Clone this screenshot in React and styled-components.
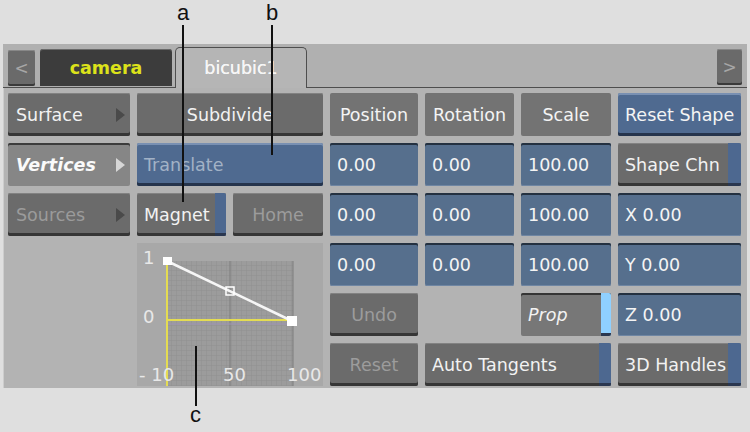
import React from "react";
import styled, { createGlobalStyle, css } from "styled-components";

const GlobalStyle = createGlobalStyle`
    html, body {
        margin: 0;
        padding: 0;
        background: #dfdfdf;
    }
    body {
        width: 750px;
        height: 432px;
        overflow: hidden;
        font-family: "DejaVu Sans", "Noto Sans", sans-serif;
    }
`;

// Page + panel
const Page = styled.div`
    position: relative;
    width: 750px;
    height: 432px;
    box-sizing: border-box;
    padding: 44px 0 0 3px;
`;

const Panel = styled.div`
    width: 744px;
    height: 344px;
    background: #b3b3b3;
    box-shadow: inset 1px 0 0 #cdcdcd;
`;

// Tab strip
const TabStrip = styled.div`
    display: flex;
    align-items: flex-end;
    height: 44px;
    box-sizing: border-box;
    padding-left: 5px;
    padding-right: 5px;
    background: #b0b0b0;
    border-bottom: 1px solid #4e4e4e;
`;

const ArrowTab = styled.div`
    display: flex;
    align-items: center;
    justify-content: center;
    width: ${(p) => p.$w}px;
    height: 36px;
    margin-bottom: ${(p) => p.$mb}px;
    background: #6a6a6a;
    border-radius: 2px;
    box-shadow: inset 0 -2px 0 #3a3a3a, inset 0 1px 0 #888;
    color: #a6a6a6;
    font-size: 17px;
`;

const Tab = styled.div`
    display: flex;
    align-items: center;
    justify-content: center;
    width: 132px;
    box-sizing: border-box;
    font-size: 17.5px;
    ${(p) =>
        p.$active
            ? css`
                  height: 41px;
                  margin: 0 0 -1px 3px;
                  background: #b5b5b5;
                  border: 1px solid #4e4e4e;
                  border-bottom: none;
                  border-radius: 5px 5px 0 0;
                  color: #f6f6f6;
                  text-shadow: 0 0 0.6px #fff;
              `
            : css`
                  height: 37px;
                  margin: 0 0 1px 5px;
                  background: #3c3c3c;
                  border-radius: 3px 3px 0 0;
                  box-shadow: inset 0 1px 0 #6a6a6a;
                  color: #dce21a;
                  font-weight: bold;
              `}
`;

const Spacer = styled.div`
    flex: 1;
`;

// Control grid
const Grid = styled.div`
    display: grid;
    grid-template-columns: 122px 186px 88px 89px 90px 123px;
    grid-auto-rows: 43px;
    gap: 7px;
    padding: 5px 0 0 5px;
`;

const cell = css`
    position: relative;
    display: flex;
    align-items: center;
    box-sizing: border-box;
    border-radius: 2px;
    font-size: 17.5px;
    white-space: nowrap;
    overflow: hidden;
`;

const NavButton = styled.div`
    ${cell};
    justify-content: space-between;
    padding: 0 5px 0 8px;
    ${(p) =>
        p.$state === "active"
            ? css`
                  background: #868686;
                  box-shadow: inset 0 2px 0 #3c3c3c;
                  color: #fafafa;
                  font-weight: bold;
                  font-style: italic;
              `
            : css`
                  background: #6b6b6b;
                  box-shadow: inset 0 -3px 0 #363636, inset 0 1px 0 #828282;
                  color: ${p.$state === "disabled" ? "#9b9b9b" : "#f2f2f2"};
              `}
`;

const NavArrow = styled.span`
    width: 0;
    height: 0;
    border-top: 7px solid transparent;
    border-bottom: 7px solid transparent;
    border-left: 9px solid ${(p) => (p.$light ? "#d6d6d6" : "#4a4a4a")};
`;

const Button = styled.div`
    ${cell};
    justify-content: ${(p) => (p.$left ? "flex-start" : "center")};
    padding-left: ${(p) => (p.$left ? "7px" : "0")};
    background: #6b6b6b;
    box-shadow: inset 0 -3px 0 #363636, inset 0 1px 0 #828282;
    color: ${(p) => (p.$dim ? "#9c9c9c" : "#f2f2f2")};
    grid-column: ${(p) => (p.$span ? `span ${p.$span}` : "auto")};
    ${(p) =>
        p.$pressed &&
        css`
            background: #777;
            box-shadow: inset 0 2px 0 #353535;
            font-style: italic;
        `}
`;

const Accent = styled.span`
    position: absolute;
    top: 0;
    right: 0;
    bottom: 0;
    width: ${(p) => p.$w || 12}px;
    background: ${(p) => p.$color || "#4d6890"};
    box-shadow: inset 0 -3px 0 #2a3750;
`;

const Header = styled.div`
    ${cell};
    justify-content: center;
    background: #737373;
    color: #f4f4f4;
`;

const Field = styled.div`
    ${cell};
    padding-left: 7px;
    background: #566f8d;
    box-shadow: inset 0 2px 0 #243140, inset 0 -1px 0 #6f86a3;
    color: #f4f4f4;
`;

const BlueButton = styled.div`
    ${cell};
    padding-left: 7px;
    background: #4f6a90;
    box-shadow: inset 0 -3px 0 #25344c, inset 0 2px 0 #7990b2;
    color: ${(p) => (p.$dim ? "#a2b2c6" : "#f4f4f4")};
`;

const Pair = styled.div`
    display: grid;
    grid-template-columns: 89px 90px;
    gap: 7px;
`;

const Empty = styled.div``;

const GraphBox = styled.div`
    grid-row: span 3;
    background: #a8a8a8;
`;

// Annotation callouts
const Overlay = styled.div`
    position: absolute;
    inset: 0;
    pointer-events: none;
`;

const Letter = styled.div`
    position: absolute;
    left: ${(p) => p.$x}px;
    top: ${(p) => p.$y}px;
    font-family: "Liberation Sans", Arial, sans-serif;
    font-size: 22px;
    line-height: 22px;
    color: #111;
`;

function Graph() {
    const label = { fill: "#e8e8e8", fontSize: 18, fontFamily: "DejaVu Sans, sans-serif" };
    return (
        <GraphBox>
            <svg width="186" height="143" viewBox="0 0 186 143">
                <defs>
                    <pattern id="fine" x="30" y="18" width="5" height="5" patternUnits="userSpaceOnUse">
                        <path d="M5 0V5H0" fill="none" stroke="#8c8c8c" strokeWidth="0.8" />
                    </pattern>
                </defs>
                <rect x="30" y="18" width="126" height="125" fill="#9c9c9c" />
                <rect x="30" y="18" width="126" height="125" fill="url(#fine)" />
                <line x1="93" y1="18" x2="93" y2="143" stroke="#7c7c7c" strokeWidth="1" />
                <line x1="156" y1="18" x2="156" y2="143" stroke="#7c7c7c" strokeWidth="1" />
                <line x1="30" y1="81" x2="156" y2="81" stroke="#9d92b4" strokeWidth="1" />
                <line x1="30" y1="18" x2="30" y2="143" stroke="#e4dc52" strokeWidth="2" />
                <line x1="30" y1="77" x2="156" y2="77" stroke="#e4dc52" strokeWidth="2" />
                <line x1="30" y1="18" x2="155" y2="78" stroke="#f6f6f6" strokeWidth="2.5" />
                <rect x="26" y="14" width="9" height="8" fill="#fff" />
                <rect x="150" y="73" width="10" height="10" fill="#fff" />
                <rect x="89" y="44" width="8" height="8" fill="none" stroke="#fff" strokeWidth="1.5" />
                <text x="6" y="21" {...label}>1</text>
                <text x="6" y="80" {...label}>0</text>
                <text x="2" y="138" {...label}>- 10</text>
                <text x="86" y="138" {...label}>50</text>
                <text x="150" y="138" {...label}>100</text>
            </svg>
        </GraphBox>
    );
}

export default function App() {
    return (
        <Page>
            <GlobalStyle />
            <Panel>
                <TabStrip>
                    <ArrowTab $w={27} $mb={1}>&lt;</ArrowTab>
                    <Tab>camera</Tab>
                    <Tab $active>bicubic1</Tab>
                    <Spacer />
                    <ArrowTab $w={25} $mb={2}>&gt;</ArrowTab>
                </TabStrip>

                <Grid>
                    {/* row 1 */}
                    <NavButton>
                        Surface <NavArrow />
                    </NavButton>
                    <Button>Subdivide</Button>
                    <Header>Position</Header>
                    <Header>Rotation</Header>
                    <Header>Scale</Header>
                    <BlueButton>Reset Shape</BlueButton>

                    {/* row 2 */}
                    <NavButton $state="active">
                        Vertices <NavArrow $light />
                    </NavButton>
                    <BlueButton $dim>Translate</BlueButton>
                    <Field>0.00</Field>
                    <Field>0.00</Field>
                    <Field>100.00</Field>
                    <Button $left>
                        Shape Chn
                        <Accent $w={13} />
                    </Button>

                    {/* row 3 */}
                    <NavButton $state="disabled">
                        Sources <NavArrow />
                    </NavButton>
                    <Pair>
                        <Button $left>
                            Magnet
                            <Accent $w={11} />
                        </Button>
                        <Button $dim>Home</Button>
                    </Pair>
                    <Field>0.00</Field>
                    <Field>0.00</Field>
                    <Field>100.00</Field>
                    <Field>X 0.00</Field>

                    {/* rows 4-6 */}
                    <Empty />
                    <Graph />
                    <Field>0.00</Field>
                    <Field>0.00</Field>
                    <Field>100.00</Field>
                    <Field>Y 0.00</Field>

                    <Empty />
                    <Button $dim>Undo</Button>
                    <Empty />
                    <Button $left $pressed>
                        Prop
                        <Accent $w={10} $color="#8fd0ff" />
                    </Button>
                    <Field>Z 0.00</Field>

                    <Empty />
                    <Button $dim>Reset</Button>
                    <Button $left $span={2}>
                        Auto Tangents
                        <Accent $w={12} />
                    </Button>
                    <Button $left>
                        3D Handles
                        <Accent $w={13} />
                    </Button>
                </Grid>
            </Panel>

            <Overlay>
                <svg width="750" height="432">
                    <line x1="183" y1="25" x2="183" y2="202" stroke="#111" strokeWidth="2" />
                    <line x1="272" y1="25" x2="272" y2="155" stroke="#111" strokeWidth="2" />
                    <line x1="196" y1="346" x2="196" y2="406" stroke="#111" strokeWidth="2" />
                </svg>
                <Letter $x={177} $y={2}>a</Letter>
                <Letter $x={266} $y={2}>b</Letter>
                <Letter $x={190} $y={404}>c</Letter>
            </Overlay>
        </Page>
    );
}
